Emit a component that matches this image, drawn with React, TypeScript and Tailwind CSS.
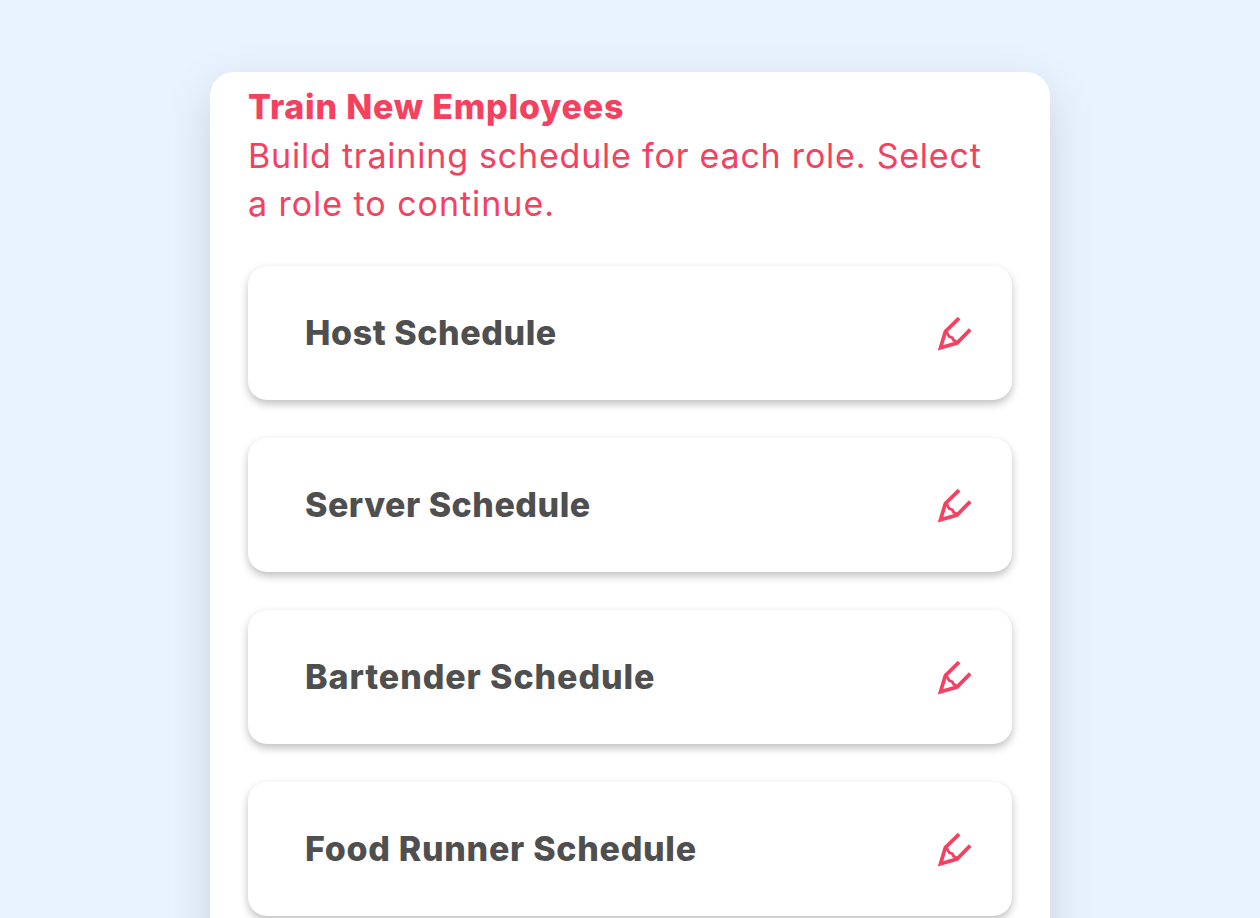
const roles = [
    { name: 'Host Schedule', tracking: 'tracking-[0.57px]' },
    { name: 'Server Schedule', tracking: 'tracking-[0.5px]' },
    { name: 'Bartender Schedule', tracking: 'tracking-[0.9px]' },
    { name: 'Food Runner Schedule', tracking: 'tracking-[0.7px]' },
];

const PenIcon = () => (
    <svg viewBox="0 0 36 36" className="w-9 h-9" fill="none" stroke="currentColor" strokeWidth="3.7">
        <path d="M23.1 3.2 L9.4 16.4 L4.5 32.7 L21 28 L34.2 14.6" />
        <path d="M10 16 L13.2 21.6 L16.4 22.8 L17.4 25 L21.4 27.4" strokeWidth="2.8" />
    </svg>
);

const App = () => {
    return (
        <main className="h-screen overflow-hidden bg-[#e8f3ff] pt-[72px] font-['Inter','Noto_Sans',sans-serif]">
            <section className="mx-auto h-[1000px] w-[840px] rounded-3xl bg-white px-[38px] pt-[11px] shadow-[0_16px_48px_rgba(0,0,0,0.13)]">
                <header className="whitespace-nowrap text-[34px] leading-[48.5px] text-[#f64060]">
                    <h1 className="font-extrabold tracking-[0.8px]">Train New Employees</h1>
                    <p>
                        <span className="tracking-[0.79px]">Build training schedule for each role. Select</span>
                        <br />
                        <span className="tracking-[0.96px]">a role to continue.</span>
                    </p>
                </header>

                <ul className="mt-[37px] flex flex-col gap-[38px]">
                    {roles.map((role) => (
                        <li key={role.name} className="flex h-[134px] items-center justify-between rounded-[19px] bg-white pl-[57px] pr-[40px] shadow-[0_4px_8px_rgba(0,0,0,0.25)]">
                            <span className={`text-[34px] font-extrabold text-[#4f4f4f] ${role.tracking}`}>{role.name}</span>
                            <button className="text-[#f64060]" aria-label="Edit">
                                <PenIcon />
                            </button>
                        </li>
                    ))}
                </ul>
            </section>
        </main>
    );
};

export default App;
